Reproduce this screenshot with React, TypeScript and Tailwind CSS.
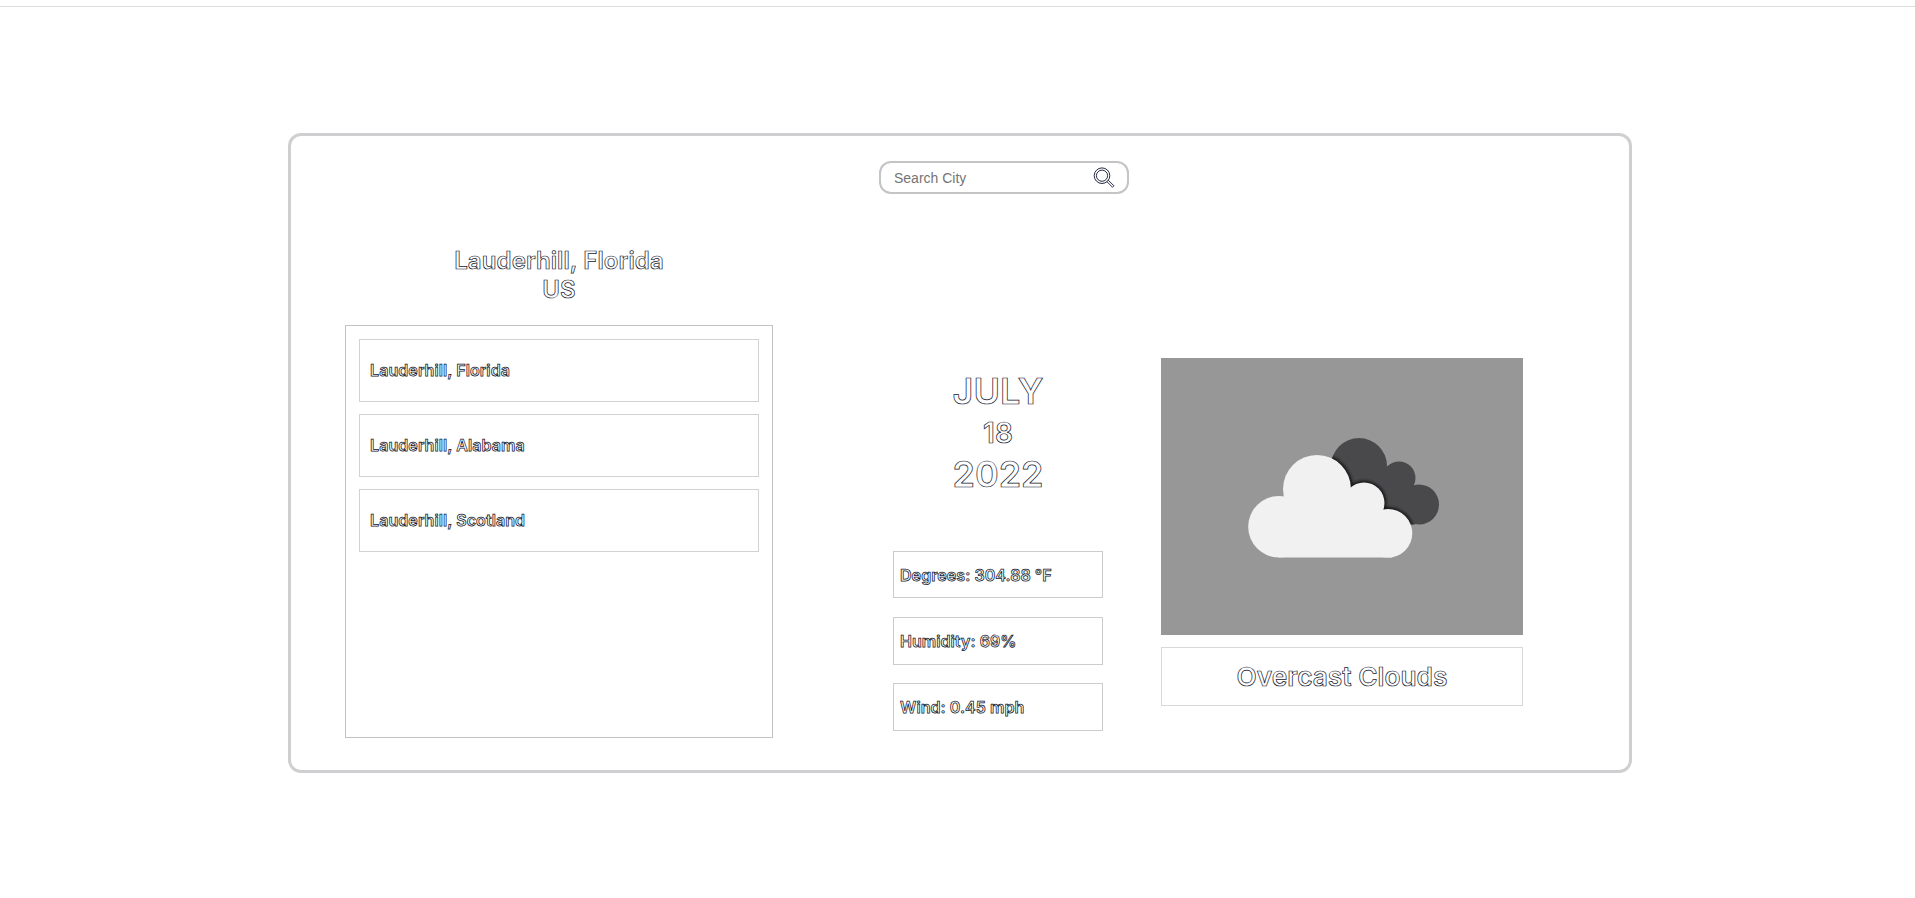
import React from "react";

const cities = ["Lauderhill, Florida", "Lauderhill, Alabama", "Lauderhill, Scotland"];
const stats = ["Degrees: 304.88 °F", "Humidity: 69%", "Wind: 0.45 mph"];

function SearchIcon() {
  return (
    <svg width="22" height="22" viewBox="0 0 22 22" fill="none" stroke="#10152c" strokeWidth="0.9">
      <circle cx="9" cy="8.7" r="7.8" />
      <circle cx="9" cy="8.7" r="5.6" />
      <path d="M13.900 14.600 L19.500 20.200 L20.900 18.800 L15.300 13.200" />
    </svg>
  );
}

function Clouds() {
  return (
    <svg width="362" height="277" viewBox="1161 358 362 277">
      <defs>
        <filter id="soft" x="-10%" y="-10%" width="120%" height="120%">
          <feGaussianBlur stdDeviation="0.7" />
        </filter>
        <filter id="shade" x="-10%" y="-10%" width="120%" height="120%">
          <feGaussianBlur stdDeviation="1.6" />
        </filter>
        <clipPath id="back">
          <circle cx="1359" cy="466" r="28" />
          <circle cx="1399" cy="478" r="16.5" />
          <circle cx="1419" cy="504.500" r="20" />
          <path d="M1340 466 H1387 L1415 490 V524.500 H1340 Z" />
        </clipPath>
        <g id="front">
          <circle cx="1317" cy="489" r="34" />
          <circle cx="1279" cy="526.800" r="30.800" />
          <circle cx="1364" cy="503" r="20.500" />
          <circle cx="1388" cy="533.300" r="24.300" />
          <path d="M1283 500 H1364 L1392 533 V557.600 H1279 L1279 510 Z" />
        </g>
      </defs>
      <rect x="1161" y="358" width="362" height="277" fill="#979797" />
      <g filter="url(#soft)">
        <g clipPath="url(#back)">
          <rect x="1320" y="430" width="130" height="110" fill="#4a4a4c" />
          <use href="#front" fill="#141416" stroke="#141416" strokeWidth="4" filter="url(#shade)" />
        </g>
        <use href="#front" fill="#f1f1f1" />
      </g>
    </svg>
  );
}

export default function App() {
  return (
    <div className="h-[898px] w-full overflow-hidden bg-white pt-1.5 font-['Inter',sans-serif] font-semibold text-white">
      <div className="h-px bg-[#dcdcdc]" />
      <main className="mt-[126px] ml-[288px] flex h-[640px] w-[1344px] flex-col rounded-[13px] border-[3px] border-[#cfcfd1]">
        <label className="mt-[25px] ml-[588px] flex h-[33px] w-[250px] shrink-0 items-center justify-between rounded-[12px] border-2 border-[#c4c4c6] pr-[12px] pl-[13px]">
          <input
            placeholder="Search City"
            className="w-[150px] bg-transparent pt-0.5 font-['Liberation_Sans',sans-serif] text-[14px] font-normal text-black outline-none placeholder:text-[#757575]"
          />
          <SearchIcon />
        </label>
        <div className="flex">
          <section className="ml-[54px] w-[428px] pt-[52px]">
            <h1 className="h-[79px] text-center text-[24px] leading-[29px] tracking-[0.1px] [-webkit-text-stroke:0.7px_#10152c]">
              Lauderhill, Florida
              <br />
              US
            </h1>
            <ul className="flex h-[413px] flex-col gap-3 border border-[#c2c2c4] p-[13px]">
              {cities.map((city) => (
                <li
                  key={city}
                  className="flex h-[63px] items-center border border-[#d2d2d2] pb-[2px] pl-[10px] text-[16px] tracking-[0.08px] [-webkit-text-stroke:0.75px_#10152c]"
                >
                  {city}
                </li>
              ))}
            </ul>
          </section>
          <section className="ml-[120px] w-[210px] pt-[172px]">
            <div className="flex h-[185px] flex-col items-center [-webkit-text-stroke:0.7px_#10152c]">
              <span className="pt-px text-[36px] leading-[48px]">JULY</span>
              <span className="pt-px text-[28px] leading-[34px]">18</span>
              <span className="text-[36px] leading-[48px]">2022</span>
            </div>
            <ul className="flex flex-col gap-[18px]">
              {stats.map((stat) => (
                <li
                  key={stat}
                  className="flex h-12 items-center border border-[#cccccc] pl-[6px] text-[16px] tracking-[0.06px] [-webkit-text-stroke:0.75px_#10152c] first:mb-px first:h-[47px]"
                >
                  {stat}
                </li>
              ))}
            </ul>
          </section>
          <section className="ml-[58px] w-[362px] pt-[164px]">
            <Clouds />
            <div className="mt-3 flex h-[59px] items-center justify-center border border-[#d8d8d8] pt-px text-[26.3px] [-webkit-text-stroke:0.7px_#10152c]">
              Overcast Clouds
            </div>
          </section>
        </div>
      </main>
    </div>
  );
}
